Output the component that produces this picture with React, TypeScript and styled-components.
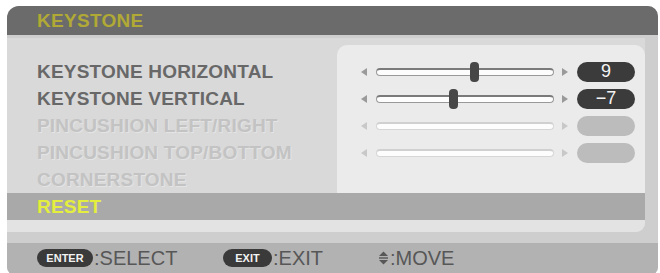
import { FC } from 'react';
import styled, { createGlobalStyle } from 'styled-components';

const GlobalStyle = createGlobalStyle`
  body {
    margin: 0;
    background: #fff;
    font-family: 'Liberation Sans', Arial, sans-serif;
  }
`;

interface Item {
  label: string;
  enabled: boolean;
  value?: number;
  slider?: boolean;
}

const items: Item[] = [
  { label: 'KEYSTONE HORIZONTAL', enabled: true, value: 9, slider: true },
  { label: 'KEYSTONE VERTICAL', enabled: true, value: -7, slider: true },
  { label: 'PINCUSHION LEFT/RIGHT', enabled: false, slider: true },
  { label: 'PINCUSHION TOP/BOTTOM', enabled: false, slider: true },
  { label: 'CORNERSTONE', enabled: false },
];

const Window = styled.div`
  margin: 6px 0 0 7px;
  width: 651px;
  height: 269px;
  display: flex;
  flex-direction: column;
  background: #cecece;
  border-radius: 12px 10px 8px 8px;
  overflow: hidden;
`;

const TitleBar = styled.div`
  height: 29px;
  flex: none;
  display: flex;
  align-items: center;
  padding-left: 30px;
  background: #6b6b6b;
  color: #b0a936;
  font-size: 19px;
  font-weight: 700;
  letter-spacing: 0.3px;
`;

const Body = styled.div`
  padding: 3px 13px 11px 0;
  flex: none;
`;

const Panel = styled.div`
  background: #d9d9d9;
  border-radius: 0 0 9px 0;
  overflow: hidden;
  display: flex;
  flex-direction: column;
`;

const Upper = styled.div`
  display: flex;
`;

const LabelColumn = styled.div`
  width: 330px;
  padding: 20px 0 0 30px;
  box-sizing: border-box;
`;

const Label = styled.div<{ $enabled: boolean }>`
  height: 27px;
  display: flex;
  align-items: center;
  font-size: 19px;
  font-weight: 700;
  letter-spacing: 0.2px;
  white-space: nowrap;
  color: ${(p) => (p.$enabled ? '#686868' : '#c3c3c3')};
  text-shadow: ${(p) => (p.$enabled ? 'none' : '1px 1px 0 #e4e4e4')};
`;

const SliderColumn = styled.div`
  flex: 1;
  margin-top: 7px;
  padding: 13px 0 0 24px;
  background: #ebebeb;
  border-radius: 10px 10px 0 0;
`;

const SliderRow = styled.div`
  height: 27px;
  display: flex;
  align-items: center;
`;

const Arrow = styled.span<{ $dir: 'left' | 'right'; $enabled: boolean }>`
  width: 0;
  height: 0;
  border-top: 4px solid transparent;
  border-bottom: 4px solid transparent;
  ${(p) =>
    p.$dir === 'left'
      ? `border-right: 6px solid ${p.$enabled ? '#9a9a9a' : '#c8c8c8'};`
      : `border-left: 6px solid ${p.$enabled ? '#9a9a9a' : '#c8c8c8'};`}
`;

const Track = styled.div<{ $enabled: boolean }>`
  position: relative;
  width: 178px;
  height: 8px;
  margin: 0 8px 0 9px;
  box-sizing: border-box;
  background: #fdfdfd;
  border: 1px solid ${(p) => (p.$enabled ? '#999' : '#d6d6d6')};
  border-top: 2px solid ${(p) => (p.$enabled ? '#7a7a7a' : '#d0d0d0')};
  border-radius: 4px;
`;

const Thumb = styled.div`
  position: absolute;
  top: 50%;
  width: 9px;
  height: 20px;
  margin-left: -4px;
  transform: translateY(-50%);
  background: #474747;
  border-radius: 4px;
`;

const ValuePill = styled.div<{ $enabled: boolean }>`
  margin-left: 9px;
  width: 58px;
  height: 20px;
  border-radius: 10px;
  background: ${(p) => (p.$enabled ? '#3b3b3b' : '#bcbcbc')};
  color: #f4f4f4;
  font-size: 18px;
  display: flex;
  align-items: center;
  justify-content: center;
`;

const ResetRow = styled.div`
  height: 27px;
  display: flex;
  align-items: center;
  padding-left: 30px;
  background: #a9a9a9;
  color: #e4ee3c;
  font-size: 19px;
  font-weight: 700;
  letter-spacing: 0.2px;
`;

const BottomStrip = styled.div`
  height: 12px;
  background: #e3e3e3;
`;

const Footer = styled.div`
  height: 30px;
  flex: none;
  display: grid;
  grid-template-columns: 186px 155px auto;
  align-items: center;
  padding-left: 30px;
  background: #b2b2b2;
`;

const Hint = styled.div`
  display: flex;
  align-items: center;
  color: #575757;
  font-size: 20px;
`;

const KeyPill = styled.span<{ $width: number }>`
  width: ${(p) => p.$width}px;
  height: 18px;
  border-radius: 9px;
  background: #3a3a3a;
  color: #f2f2f2;
  font-size: 11px;
  font-weight: 700;
  display: inline-flex;
  align-items: center;
  justify-content: center;
  margin-right: 1px;
`;

const MoveIcon: FC = () => (
  <svg width="11" height="14" viewBox="0 0 11 14" style={{ marginRight: 1 }}>
    <path d="M5.5 0.5 L10 5 H1 Z" fill="#575757" />
    <rect x="1" y="6.3" width="9" height="1.4" fill="#575757" />
    <path d="M5.5 13.5 L10 9 H1 Z" fill="#575757" />
  </svg>
);

const toPct = (v: number) => 48.5 + v * 0.75;

const App: FC = () => (
  <>
    <GlobalStyle />
    <Window>
      <TitleBar>KEYSTONE</TitleBar>
      <Body>
        <Panel>
          <Upper>
            <LabelColumn>
              {items.map((it) => (
                <Label key={it.label} $enabled={it.enabled}>
                  {it.label}
                </Label>
              ))}
            </LabelColumn>
            <SliderColumn>
              {items
                .filter((it) => it.slider)
                .map((it) => (
                  <SliderRow key={it.label}>
                    <Arrow $dir="left" $enabled={it.enabled} />
                    <Track $enabled={it.enabled}>
                      {it.value !== undefined && (
                        <Thumb style={{ left: `${toPct(it.value)}%` }} />
                      )}
                    </Track>
                    <Arrow $dir="right" $enabled={it.enabled} />
                    <ValuePill $enabled={it.enabled}>
                      {it.value !== undefined
                        ? it.value < 0
                          ? `\u2212${Math.abs(it.value)}`
                          : it.value
                        : ''}
                    </ValuePill>
                  </SliderRow>
                ))}
            </SliderColumn>
          </Upper>
          <ResetRow>RESET</ResetRow>
          <BottomStrip />
        </Panel>
      </Body>
      <Footer>
        <Hint>
          <KeyPill $width={56}>ENTER</KeyPill>:SELECT
        </Hint>
        <Hint>
          <KeyPill $width={49}>EXIT</KeyPill>:EXIT
        </Hint>
        <Hint>
          <MoveIcon />:MOVE
        </Hint>
      </Footer>
    </Window>
  </>
);

export default App;
